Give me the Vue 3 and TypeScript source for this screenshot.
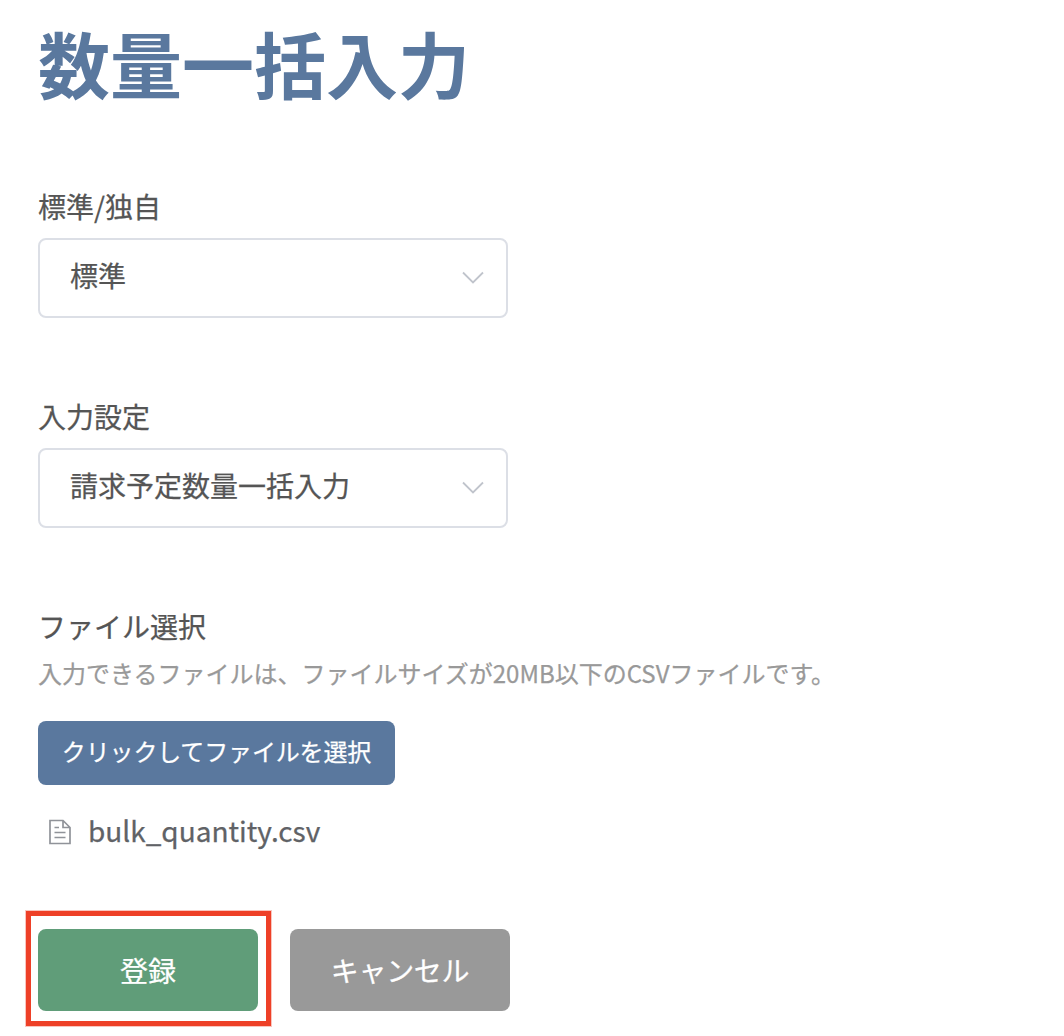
<script setup lang="ts">
interface SelectField {
  label: string
  value: string
}

const fields: SelectField[] = [
  { label: '標準/独自', value: '標準' },
  { label: '入力設定', value: '請求予定数量一括入力' },
]
const fileName = 'bulk_quantity.csv'
</script>

<template>
  <main class="page">
    <h1 class="title">数量一括入力</h1>

    <section v-for="field in fields" :key="field.label" class="field">
      <div class="label">{{ field.label }}</div>
      <div class="select">
        <span>{{ field.value }}</span>
        <svg class="chevron" width="24" height="16" viewBox="0 0 24 16">
          <path d="M2 2.5 L12 12.5 L22 2.5" fill="none" stroke="#c0c4cc" stroke-width="1.8" />
        </svg>
      </div>
    </section>

    <section class="upload">
      <div class="label">ファイル選択</div>
      <p class="hint">入力できるファイルは、ファイルサイズが20MB以下のCSVファイルです。</p>
      <button class="pick" type="button">クリックしてファイルを選択</button>
      <div class="file">
        <svg width="24" height="26" viewBox="0 0 24 26" fill="none" stroke="#909399" stroke-width="1.7">
          <path d="M2 1.5H15L22 8.5V24.5H2Z M15 1.5V8.5H22 M6.5 8.5H11 M6.5 13.5H17.5 M6.5 18.5H17.5" />
        </svg>
        <span>{{ fileName }}</span>
      </div>
    </section>

    <div class="actions">
      <div class="highlight"><button class="btn submit" type="button">登録</button></div>
      <button class="btn cancel" type="button">キャンセル</button>
    </div>
  </main>
</template>

<style>
body { background: #fff; }
</style>

<style scoped>
.page {
  box-sizing: border-box;
  height: 1036px;
  padding: 10px 25px 0 38px;
  overflow: hidden;
  color: #555;
  font-family: "Noto Sans CJK JP", sans-serif;
  font-size: 28px;
  -webkit-text-stroke: 0.25px currentColor;
}
.title {
  height: 104px;
  margin: 0 0 72px;
  color: #5a789e;
  font-size: 72px;
  font-weight: 700;
  line-height: 104px;
  -webkit-text-stroke: 0;
}
.field { height: 210px; }
.label { height: 40px; line-height: 40px; }
.select {
  display: flex;
  box-sizing: border-box;
  width: 470px;
  height: 80px;
  margin-top: 12px;
  padding: 0 21px 4px 30px;
  align-items: center;
  justify-content: space-between;
  border: 2px solid #dcdfe6;
  border-radius: 8px;
}
.select span { margin-top: -2px; }
.chevron { margin-top: 4px; }
.upload { height: 305px; }
.hint {
  height: 36px;
  margin: 9px 0 30px;
  color: #999;
  font-size: 24px;
  line-height: 36px;
}
button {
  display: block;
  padding: 0;
  border: 0;
  border-radius: 8px;
  color: #fff;
  font-family: inherit;
}
.pick {
  width: 357px;
  height: 64px;
  padding-bottom: 5px;
  background: #5a789e;
  font-size: 24px;
  letter-spacing: -0.15px;
}
.file {
  display: flex;
  height: 40px;
  margin-top: 27px;
  padding-left: 10px;
  align-items: center;
  gap: 16px;
  color: #606266;
  line-height: 40px;
}
.file svg { margin-top: -1px; }
.file span { margin-top: -4px; }
.actions { display: flex; align-items: flex-start; gap: 19px; margin-left: -12px; }
.highlight {
  padding: 13px 8px 10px 7px;
  border: 5px solid #ee4027;
  box-shadow: 0 0 0 1px rgb(238 64 39 / 30%);
}
.btn { width: 220px; height: 82px; font-size: 28px; }
.submit { background: #609d79; }
.cancel { margin-top: 18px; background: #999; letter-spacing: -0.3px; }
</style>
